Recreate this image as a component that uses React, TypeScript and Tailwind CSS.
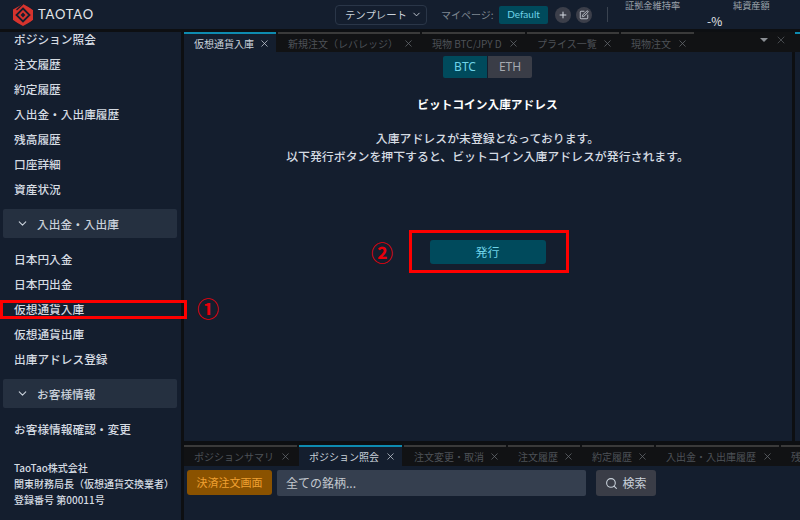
import { ChevronDown, Plus, Search, SquarePen, X } from "lucide-react";

const font = { fontFamily: '"Noto Sans CJK JP", "Noto Sans", sans-serif' };

function Tab({ label, active, w }: { label: string; active?: boolean; w: string }) {
  return (
    <div className={`${w} shrink-0 h-full flex items-center justify-between pl-[10px] pr-[6px] border-t-2 text-[10px] whitespace-nowrap overflow-hidden ${active ? "border-[#0e8bb0] bg-[#141e2e] text-[#c9d1da]" : "border-[#3a3a3a] bg-[#111214] text-[#4d5157]"}`}>
      <span>{label}</span>
      <X size={11} strokeWidth={1.6} className={`shrink-0 ${active ? "text-[#c9d1da]" : "text-[#6a6e73]"}`} />
    </div>
  );
}

function Item({ label }: { label: string }) {
  return <div className="h-[25px] flex items-center pl-[14px] text-[11.7px] font-medium text-[#d5dbe2] whitespace-nowrap">{label}</div>;
}

function Group({ label }: { label: string }) {
  return (
    <div className="ml-[3px] mr-[4px] h-[29px] rounded-[2px] bg-[#253040] flex items-center pl-[13px] gap-[8px] text-[11.7px] font-medium text-[#c9d1da]">
      <ChevronDown size={13} strokeWidth={2} />
      <span>{label}</span>
    </div>
  );
}

function Logo() {
  return (
    <svg width="20" height="22" viewBox="0 0 20 22" className="shrink-0">
      <polygon points="10,0 20,5.5 20,16.5 10,22 0,16.5 0,5.5" fill="#d6332d" />
      <polygon points="10,4.5 16.5,11 10,17.5 3.5,11" fill="none" stroke="#141e2e" strokeWidth="1.8" />
      <polygon points="10,8.6 12.4,11 10,13.4 7.6,11" fill="#141e2e" />
      <path d="M10 0 L3.5 6 M20 5.5 L14 0.5 M0 16.5 L6 21.5 M20 16.5 L14 22" stroke="#141e2e" strokeWidth="1.2" />
    </svg>
  );
}

export default function App() {
  return (
    <div style={font} className="relative w-[800px] h-[520px] overflow-hidden bg-[#0d0f12] flex flex-col text-[#d5dbe2]">
      {/* header */}
      <header className="h-[29px] shrink-0 bg-[#141e2e] flex items-center">
        <div className="w-[335px] shrink-0 flex items-center pl-[13px] gap-[5px]">
          <Logo />
          <span style={{ fontFamily: "Lato, sans-serif" }} className="text-[13px] tracking-[0.8px] text-[#e4e6e9]">TAOTAO</span>
        </div>
        <div className="w-[92px] h-[20px] shrink-0 rounded-[4px] border border-[#2a3648] flex items-center justify-end pr-[4px] gap-[4px] text-[10.4px] text-[#c9d1da]">
          <span>テンプレート</span>
          <ChevronDown size={11} strokeWidth={2} />
        </div>
        <span className="ml-[14px] w-[58px] shrink-0 text-[10px] text-[#7f8791] whitespace-nowrap">マイページ:</span>
        <div style={{ fontFamily: "Lato, sans-serif" }} className="w-[49px] h-[18px] shrink-0 rounded-[2px] bg-[#004a5c] flex items-center justify-center text-[10px] text-[#6fd3e8]">Default</div>
        <div className="ml-[7px] w-[16px] h-[16px] rounded-full bg-[#3c3f4a] flex items-center justify-center text-[#d5dbe2]"><Plus size={10} strokeWidth={2.4} /></div>
        <div className="ml-[5px] w-[16px] h-[16px] rounded-full bg-[#3c3f4a] flex items-center justify-center text-[#d5dbe2]"><SquarePen size={10} strokeWidth={2} /></div>
        <div className="ml-[15px] w-px h-[15px] bg-[#3a4350]" />
        <div className="ml-[17px] w-[72px] h-full shrink-0 flex flex-col items-start">
          <span className="text-[9.2px] leading-[10px] text-[#9aa1a9] whitespace-nowrap">証拠金維持率</span>
        </div>
        <div className="relative w-[60px] h-full shrink-0">
          <span className="block pl-[36px] text-[9.2px] leading-[10px] text-[#9aa1a9] whitespace-nowrap">純資産額</span>
          <span className="absolute left-[10px] top-[14px] text-[12px] leading-[14px] text-[#e4e6e9]">-%</span>
        </div>
      </header>
      <div className="h-[3px] shrink-0 bg-[#0d0f12]" />

      <div className="flex-1 min-h-0 flex">
        {/* sidebar */}
        <aside className="w-[181px] shrink-0 bg-[#141e2e] overflow-hidden flex flex-col">
          <div className="-mt-[6px]">
            {["ポジション照会", "注文履歴", "約定履歴", "入出金・入出庫履歴", "残高履歴", "口座詳細", "資産状況"].map((l) => <Item key={l} label={l} />)}
          </div>
          <div className="mt-[8px]"><Group label="入出金・入出庫" /></div>
          <div className="mt-[8px]">
            {["日本円入金", "日本円出金", "仮想通貨入庫", "仮想通貨出庫", "出庫アドレス登録"].map((l) => <Item key={l} label={l} />)}
          </div>
          <div className="mt-[8px]"><Group label="お客様情報" /></div>
          <div className="mt-[8px]"><Item label="お客様情報確認・変更" /></div>
          <div className="mt-[19px] pl-[14px] text-[10px] leading-[16px] font-medium text-[#d5dbe2] whitespace-nowrap">
            <div>TaoTao株式会社</div>
            <div>関東財務局長（仮想通貨交換業者）</div>
            <div>登録番号 第00011号</div>
          </div>
        </aside>
        <div className="w-[2px] shrink-0" />

        {/* main */}
        <div className="flex-1 min-w-0 flex flex-col pl-px">
          <div className="h-[20px] shrink-0 flex items-stretch gap-[2px] bg-[#111214] relative">
            <Tab active label="仮想通貨入庫" w="w-[92px]" />
            <Tab label="新規注文（レバレッジ）" w="w-[142px]" />
            <Tab label="現物 BTC/JPY D" w="w-[103px]" />
            <Tab label="プライス一覧" w="w-[92px]" />
            <Tab label="現物注文" w="w-[73px]" />
            <div className="absolute right-[13px] top-[2px] flex items-center gap-[7px] text-[#6a6e73]">
              <span className="w-0 h-0 border-l-[4px] border-r-[4px] border-t-[4px] border-l-transparent border-r-transparent border-t-[#8a8e93]" />
              <X size={12} strokeWidth={1.2} />
            </div>
            <div className="absolute right-0 top-0 w-[5px] h-[2px] bg-[#0e8bb0]" />
          </div>

          <div className="flex-1 min-h-0 flex">
            <section className="w-[607px] shrink-0 bg-[#141e2e] flex flex-col items-center">
              <div className="mt-[4px] flex gap-px text-[12px]" style={{ fontFamily: '"Noto Sans", sans-serif' }}>
                <div className="w-[44px] h-[22px] rounded-l-[2px] bg-[#004a5c] text-[#6fd3e8] flex items-center justify-center">BTC</div>
                <div className="w-[44px] h-[22px] rounded-r-[2px] bg-[#3a3d47] text-[#a5a9b0] flex items-center justify-center">ETH</div>
              </div>
              <h2 className="mt-[17px] h-[18px] leading-[18px] text-[11.7px] font-bold text-white">ビットコイン入庫アドレス</h2>
              <p className="mt-[16px] text-[11.9px] leading-[18px] font-medium text-center text-[#d5dbe2]">
                入庫アドレスが未登録となっております。<br />
                以下発行ボタンを押下すると、ビットコイン入庫アドレスが発行されます。
              </p>
              <button className="mt-[75px] w-[116px] h-[24px] rounded-[3px] bg-[#004a5c] text-[12px] text-[#6fd3e8] flex items-center justify-center">発行</button>
            </section>
            <div className="w-px shrink-0 bg-[#141e2e]" />
            <div className="flex-1 bg-[#141e2e] ml-[3px]" />
          </div>

          <div className="h-[4px] shrink-0" />
          <div className="h-[21px] shrink-0 flex items-stretch gap-[2px] bg-[#111214] overflow-hidden">
            <Tab label="ポジションサマリ" w="w-[113px]" />
            <Tab active label="ポジション照会" w="w-[103px]" />
            <Tab label="注文変更・取消" w="w-[102px]" />
            <Tab label="注文履歴" w="w-[72px]" />
            <Tab label="約定履歴" w="w-[72px]" />
            <Tab label="入出金・入出庫履歴" w="w-[123px]" />
            <div className="w-[72px] shrink-0 h-full pl-[10px] border-t-2 border-[#3a3a3a] bg-[#111214] text-[10px] text-[#4d5157] flex items-center">残</div>
          </div>
          <div className="h-[54px] shrink-0 bg-[#141e2e] flex items-start pt-[4px] pl-[3px]">
            <button className="w-[85px] h-[25px] rounded-[3px] bg-[#8a5200] text-[11px] text-[#f0a030] flex items-center justify-center">決済注文画面</button>
            <div className="ml-[5px] w-[309px] h-[26px] rounded-[2px] bg-[#353f4f] pl-[9px] flex items-center text-[12px] text-[#c3c8ce]">全ての銘柄...</div>
            <button className="ml-[10px] w-[60px] h-[26px] rounded-[3px] bg-[#3a3d47] text-[12px] text-[#c9d1da] flex items-center justify-center gap-[4px]">
              <Search size={13} strokeWidth={2} />
              <span>検索</span>
            </button>
          </div>
        </div>
      </div>

      {/* annotations */}
      <div className="absolute left-0 top-[300px] w-[187px] h-[19px] border-[3px] border-[#ff0000]" />
      <div className="absolute left-[409px] top-[230px] w-[160px] h-[43px] border-[3px] border-[#ff0000]" />
      <span className="absolute left-[197px] top-[295px] text-[22px] font-bold leading-[24px] text-[#e8000b]">①</span>
      <span className="absolute left-[371px] top-[239px] text-[22px] font-bold leading-[24px] text-[#e8000b]">②</span>
    </div>
  );
}
